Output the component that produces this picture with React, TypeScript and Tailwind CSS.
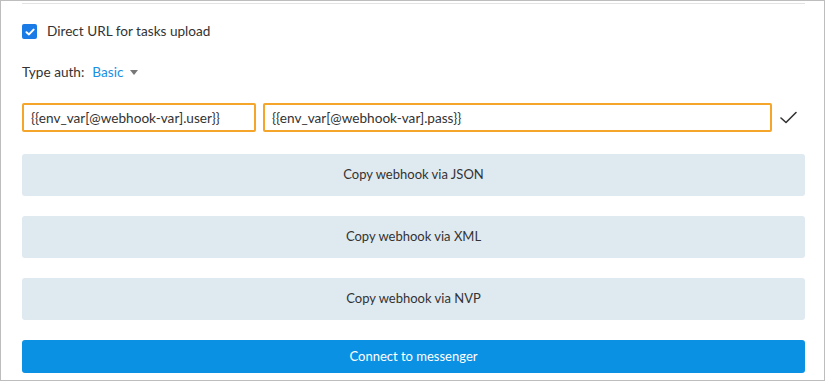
import React, { useState } from 'react';

const buttons = ['Copy webhook via JSON', 'Copy webhook via XML', 'Copy webhook via NVP'];

const App: React.FC = () => {
  const [direct, setDirect] = useState(true);
  const [user, setUser] = useState('{{env_var[@webhook-var].user}}');
  const [pass, setPass] = useState('{{env_var[@webhook-var].pass}}');

  return (
    <div
      className="w-[825px] h-[381px] bg-white border border-[#bdbdbd] overflow-hidden text-[#333] text-[13.6px]"
      style={{ fontFamily: 'Lato, "Open Sans", sans-serif' }}
    >
      <div className="pl-[21px] pr-[19px] pt-[2px]">
        <div className="border-t border-[#e3e3e3]" />

        {/* checkbox */}
        <label className="flex items-center h-[15px] mt-[20px] cursor-pointer">
          <span
            onClick={() => setDirect(!direct)}
            className={`w-[15px] h-[15px] rounded-[2px] flex items-center justify-center ${direct ? 'bg-[#1a7ae6]' : 'border border-[#999]'}`}
          >
            {direct && (
              <svg width="10" height="8" viewBox="0 0 10 8" fill="none">
                <path d="M1.5 4.2 L4 6.4 L8.6 1.6" stroke="white" strokeWidth="2" strokeLinecap="round" strokeLinejoin="round" />
              </svg>
            )}
          </span>
          <span className="ml-[10px]">Direct URL for tasks upload</span>
        </label>

        {/* type auth */}
        <div className="flex items-center mt-[26px] h-[15px]">
          <span>Type auth:</span>
          <span className="ml-[8px] text-[#1a8fe3]">Basic</span>
          <svg className="ml-[7px]" width="8" height="5" viewBox="0 0 8 5">
            <path d="M0 0 H8 L4 5 Z" fill="#777" />
          </svg>
        </div>

        {/* credentials */}
        <div className="flex items-center mt-[23px]">
          <input
            value={user}
            onChange={(e) => setUser(e.target.value)}
            className="w-[234px] h-[29px] border-2 border-[#f5a52a] rounded-[2px] px-[7px] outline-none text-[#333]"
          />
          <input
            value={pass}
            onChange={(e) => setPass(e.target.value)}
            className="ml-[7px] w-[509px] h-[29px] border-2 border-[#f5a52a] rounded-[2px] px-[7px] outline-none text-[#333]"
          />
          <div className="flex-1 flex justify-center">
            <svg width="17" height="13" viewBox="0 0 17 13" fill="none">
              <path d="M1 7 L6 11.5 L16 1.5" stroke="#333" strokeWidth="1.6" strokeLinecap="round" strokeLinejoin="round" />
            </svg>
          </div>
        </div>

        {/* copy buttons */}
        <div className="flex flex-col gap-[20px] mt-[22px]">
          {buttons.map((b) => (
            <button key={b} className="h-[42px] w-full rounded-[3px] bg-[#dfe9f0] text-[#333] text-[13px]">
              {b}
            </button>
          ))}
          <button className="h-[33px] w-full rounded-[3px] bg-[#0a91e4] text-white text-[13px]">
            Connect to messenger
          </button>
        </div>
      </div>
    </div>
  );
};

export default App;
